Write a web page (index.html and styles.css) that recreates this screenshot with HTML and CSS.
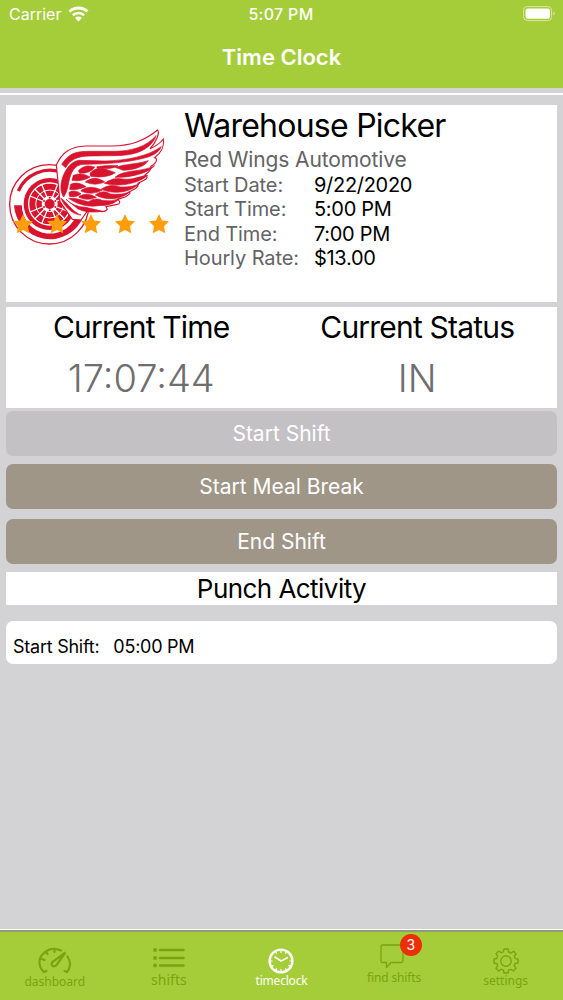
FILE: index.html
```html
<!DOCTYPE html>
<html lang="en">
<head>
  <meta charset="UTF-8" />
  <meta name="viewport" content="width=device-width, initial-scale=1.0" />
  <title>Time Clock</title>
  <link rel="stylesheet" href="styles.css">
</head>
<body>
  <svg class="defs" width="0" height="0">
    <symbol id="star" viewBox="0 0 20 20">
      <path d="M10 0 L13 6.4 L20 7.3 L15 12.3 L16.2 19.3 L10 16 L3.8 19.3 L5 12.3 L0 7.3 L7 6.4 Z" />
    </symbol>
  </svg>

  <header class="header">
    <div class="status-bar">
      <div class="carrier">
        <span>Carrier</span>
        <svg width="21" height="16" viewBox="0 0 21 16">
          <path d="M1.5 5.6 A13 13 0 0 1 19.5 5.6" fill="none" stroke="#fff" stroke-width="2.8" />
          <path d="M4.8 9.3 A8.2 8.2 0 0 1 16.2 9.3" fill="none" stroke="#fff" stroke-width="2.6" />
          <path d="M10.5 15.4 L7 11.9 A5 5 0 0 1 14 11.9 Z" fill="#fff" />
        </svg>
      </div>
      <span class="clock">5:07 PM</span>
      <svg class="battery" width="33" height="16" viewBox="0 0 33 16">
        <rect x="0.6" y="0.6" width="28" height="14" rx="4" fill="none" stroke="#fff" stroke-opacity="0.55" />
        <rect x="2.5" y="2.5" width="24.5" height="10.3" rx="2.2" fill="#fff" />
        <path d="M30.5 5.5 Q33 7.6 30.5 9.7 Z" fill="#fff" fill-opacity="0.6" />
      </svg>
    </div>
    <h1>Time Clock</h1>
  </header>

  <main class="content">
    <section class="job-card">
      <div class="photo">
        <svg class="logo" width="172" height="145" viewBox="18 15 516 435">
          <!-- wheel -->
          <circle cx="148" cy="313" r="119" fill="#fff" stroke="#d8142f" stroke-width="4" />
          <path d="M42 316 L66 316 A84 84 0 0 0 232 335 L250 350 A108 108 0 0 1 42 316 Z" fill="#d8142f" />
          <path d="M55 273 A103 103 0 0 1 190 219" fill="none" stroke="#d8142f" stroke-width="10" />
          <circle cx="149" cy="312" r="84" fill="#fff" />
          <circle cx="149" cy="312" r="78" fill="#d8142f" />
          <circle cx="149" cy="312" r="63" fill="none" stroke="#fff" stroke-width="4" />
          <circle cx="149" cy="312" r="42" fill="none" stroke="#fff" stroke-width="3" />
          <g stroke="#fff" stroke-width="4">
            <path d="M125 253 L173 371 M173 253 L125 371 M90 288 L208 336 M208 288 L90 336" />
            <path d="M149 312 L104 267 M149 312 L194 267 M149 312 L104 357 M149 312 L194 357" />
          </g>
          <circle cx="149" cy="312" r="24" fill="#fff" />
          <circle cx="149" cy="312" r="15" fill="#d8142f" />
          <g fill="#d8142f">
            <circle cx="149" cy="293" r="3" /><circle cx="149" cy="331" r="3" />
            <circle cx="132" cy="303" r="3" /><circle cx="166" cy="303" r="3" />
            <circle cx="132" cy="321" r="3" /><circle cx="166" cy="321" r="3" />
          </g>
          <!-- wing -->
          <g transform="translate(165 75)">
            <path d="M4 120 C20 84 44 65 92 63 L170 63 C230 62 266 48 308 15 C314 23 306 48 285 71 C302 64 315 55 325 42 C329 64 317 85 299 98 Q308 101 302 112 Q296 120 288 124 Q290 135 270 150 Q284 156 267 166 L249 175 Q252 183 239 192 L222 201 Q232 204 210 216 L188 223 Q203 235 184 239 L153 245 Q163 258 141 260 L100 254 L78 285 L52 283 L15 230 Z" fill="#fff" stroke="#d8142f" stroke-width="3.5" />
            <g fill="#d8142f" stroke="#d8142f" stroke-width="2">
              <path d="M20 118 C39 89 58 79 98 79 L180 79 C230 78 275 65 303 32 C297 52 278 72 246 83 C210 95 164 91 104 93 C66 94 47 103 32 128 Z" />
              <path d="M26 216 C2 184 34 106 75 106 L150 108 C219 106 277 94 319 65 C314 79 296 91 276 97 C232 110 170 116 123 117 L86 118 C58 119 48 142 42 168 C38 188 36 202 26 216 Z" />
              <path d="M70 137 C86 122 100 120 119 126 Q108 145 74 145 Z" />
              <path d="M126 125 Q156 120 189 122 Q174 134 126 129 Z" />
              <path d="M181 127 C212 116 247 118 280 107 C269 125 237 134 205 136 Z" />
              <path d="M55 151 Q80 141 105 156 Q80 171 51 166 Z" />
              <path d="M105 145 Q123 124 151 132 L181 143 Q153 161 107 154 Z" />
              <path d="M180 157 C207 132 259 143 299 122 C278 145 227 158 180 157 Z" />
              <path d="M47 178 Q68 168 93 185 Q66 197 44 193 Z" />
              <path d="M91 171 Q119 149 149 171 Q120 184 91 171 Z" />
              <path d="M148 175 Q174 156 203 162 C234 167 255 152 278 151 C254 174 196 188 148 175 Z" />
              <path d="M79 195 Q106 178 141 196 Q112 212 79 199 Z" />
              <path d="M138 193 Q164 174 196 186 Q234 188 255 174 C230 200 184 211 138 193 Z" />
              <path d="M42 202 Q58 192 78 206 Q65 218 43 214 Z" />
              <path d="M72 214 Q97 200 124 217 Q97 229 72 217 Z" />
              <path d="M121 210 Q144 192 166 207 Q201 211 225 200 C200 225 151 227 121 210 Z" />
              <path d="M41 220 C76 217 107 239 146 238 C112 250 72 242 41 220 Z" />
              <path d="M98 232 Q121 215 141 226 Q170 231 193 221 C170 244 137 247 98 232 Z" />
              <path d="M18 220 C35 230 54 263 78 270 C58 270 29 249 18 220 Z" />
              <path d="M33 223 Q56 246 92 247 L143 259 Q97 266 69 252 Z" />
            </g>
          </g>
        </svg>
        <div class="stars">
          <svg><use href="#star" /></svg>
          <svg><use href="#star" /></svg>
          <svg><use href="#star" /></svg>
          <svg><use href="#star" /></svg>
          <svg><use href="#star" /></svg>
        </div>
      </div>
      <div class="job-info">
        <h2>Warehouse Picker</h2>
        <p class="company">Red Wings Automotive</p>
        <dl>
          <dt>Start Date:</dt><dd>9/22/2020</dd>
          <dt>Start Time:</dt><dd>5:00 PM</dd>
          <dt>End Time:</dt><dd>7:00 PM</dd>
          <dt>Hourly Rate:</dt><dd>$13.00</dd>
        </dl>
      </div>
    </section>

    <section class="now-card">
      <div class="now-col">
        <h3>Current Time</h3>
        <div class="now-value">17:07:44</div>
      </div>
      <div class="now-col">
        <h3>Current Status</h3>
        <div class="now-value">IN</div>
      </div>
    </section>

    <div class="actions">
      <button class="btn btn-start" disabled>Start Shift</button>
      <button class="btn">Start Meal Break</button>
      <button class="btn">End Shift</button>
    </div>

    <h3 class="punch-title">Punch Activity</h3>
    <div class="punch-row">
      <span>Start Shift:</span>
      <span>05:00 PM</span>
    </div>
  </main>

  <nav class="tab-bar">
    <a class="tab dashboard">
      <svg width="34" height="28" viewBox="0 0 34 28" fill="none" stroke="#7aa40d" stroke-width="2.2" stroke-linecap="round">
        <path d="M6 25 C0 20 0 11 5.5 6.5 C10 1.5 17 0.5 23 3.5" />
        <path d="M29.5 9.5 C33 15 33 20 29 25" />
        <path d="M6 25 L8.5 24 M29 25 L26.5 24 M4 12 L6.5 13 M16.5 2 V5 M8 5 L9.5 7" />
        <path d="M27.5 5.5 L15 14.5 C11.5 18 15.5 21 18.5 18 Z" />
      </svg>
      <span>dashboard</span>
    </a>
    <a class="tab shifts">
      <svg width="32" height="20" viewBox="0 0 32 20" stroke="#7aa40d" stroke-width="2.5" stroke-linecap="round">
        <path d="M7 2 H30.5 M7 10 H30.5 M7 17.5 H30.5" />
        <path d="M2 2 H2.1 M2 10 H2.1 M2 17.5 H2.1" stroke-width="3.8" />
      </svg>
      <span>shifts</span>
    </a>
    <a class="tab timeclock">
      <svg width="26" height="26" viewBox="0 0 26 26" fill="none" stroke="#fff">
        <circle cx="13" cy="13" r="11.4" stroke-width="2.4" />
        <path d="M6.5 8.8 L13 13 L19.8 9.5" stroke-width="1.8" />
        <path d="M13 2 V5 M13 21 V24 M2 13 H4.5 M21.5 13 H24 M7.5 3.5 L8.7 5.6 M18.5 3.5 L17.3 5.6 M3.5 18.5 L5.6 17.3 M22.5 18.5 L20.4 17.3 M7.5 22.5 L8.7 20.4 M18.5 22.5 L17.3 20.4" stroke-width="1.2" />
      </svg>
      <span>timeclock</span>
    </a>
    <a class="tab find-shifts">
      <svg width="24" height="25" viewBox="0 0 24 25" fill="none" stroke="#7aa40d" stroke-width="1.3" stroke-linejoin="round">
        <path d="M2.5 1 H21.5 Q23 1 23 2.5 V17 Q23 18.5 21.5 18.5 H11 L6.5 23.5 V18.5 H2.5 Q1 18.5 1 17 V2.5 Q1 1 2.5 1 Z" />
      </svg>
      <span class="badge">3</span>
      <span>find shifts</span>
    </a>
    <a class="tab settings">
      <svg width="26" height="26" viewBox="0 0 26 26" fill="none" stroke="#7aa40d" stroke-width="1.4" stroke-linejoin="round">
        <path d="M11 1 H15 L15.7 4 L18.2 5 L20.8 3.2 L23 6 L21.4 8.2 L22.2 10.6 L25 11 V15 L22.2 15.5 L21.3 17.8 L23 20.2 L20.2 23 L17.9 21.3 L15.6 22.2 L15 25 H11 L10.4 22.2 L8.1 21.3 L5.8 23 L3 20.2 L4.7 17.8 L3.8 15.5 L1 15 V11 L3.8 10.5 L4.7 8.1 L3 5.8 L5.8 3 L8.1 4.7 L10.4 3.8 Z" />
        <circle cx="13" cy="13" r="5.2" />
      </svg>
      <span>settings</span>
    </a>
  </nav>
</body>
</html>
```
FILE: styles.css
```css
* {
  box-sizing: border-box;
}
body {
  margin: 0;
  height: 1000px;
  display: flex;
  flex-direction: column;
  overflow: hidden;
  font-family: Inter, "Liberation Sans", sans-serif;
  background: #d3d3d5;
  color: #000;
}
h1, h2, h3, p, dl, dd {
  margin: 0;
  font-weight: 400;
}
.defs {
  position: absolute;
}

/* header */
.header {
  height: 88px;
  background: #a5cd39;
  color: #fff;
}
.status-bar {
  display: grid;
  grid-template-columns: 1fr auto 1fr;
  align-items: center;
  height: 28px;
  padding: 0 7px 0 9px;
  font-size: 16px;
}
.carrier {
  display: flex;
  align-items: center;
  gap: 7px;
}
.clock {
  margin-right: 3px;
  font-weight: 500;
  letter-spacing: 0.3px;
}
.battery {
  justify-self: end;
}
.header h1 {
  margin-top: 14px;
  text-align: center;
  font-size: 22px;
  line-height: 30px;
  font-weight: 600;
}

/* content */
.content {
  flex: 1;
  margin-top: 5px;
  padding: 10px 6px 0;
  border-top: 2px solid #fff;
}
.job-card {
  display: flex;
  height: 197px;
  background: #fff;
}
.photo {
  position: relative;
  width: 178px;
}
.logo {
  display: block;
}
.stars {
  position: absolute;
  left: 7px;
  top: 109px;
  display: flex;
  gap: 14px;
}
.stars svg {
  width: 20px;
  height: 20px;
  fill: #ff9d0a;
}
.job-info h2 {
  padding-top: 2px;
  font-size: 32px;
  line-height: 38px;
  letter-spacing: -0.75px;
}
.company {
  margin-top: 2px;
  font-size: 21px;
  line-height: 25px;
  letter-spacing: -0.12px;
  color: #636366;
}
.job-info dl {
  display: grid;
  grid-template-columns: 130px auto;
  padding-top: 1px;
  font-size: 20px;
  line-height: 24.4px;
}
.job-info dt {
  letter-spacing: -0.1px;
  color: #636366;
}
.job-info dd {
  letter-spacing: -0.3px;
}
.now-card {
  display: flex;
  height: 101px;
  margin-top: 5px;
  background: #fff;
}
.now-col {
  width: 50%;
  padding-right: 5px;
  text-align: center;
}
.now-col h3 {
  padding-top: 2px;
  font-size: 30px;
  line-height: 36px;
  letter-spacing: -0.8px;
}
.now-col + .now-col {
  padding-right: 4px;
}
.now-value {
  margin-top: 9px;
  font-size: 38px;
  line-height: 48px;
  font-weight: 300;
  color: #6e6e70;
}
.actions {
  display: flex;
  flex-direction: column;
  gap: 10px;
  margin-top: 3px;
}
.btn {
  height: 45px;
  padding: 0 0 1px;
  border: none;
  border-radius: 7px;
  background: #9f9688;
  color: #fff;
  font-family: inherit;
  font-size: 21px;
}
.btn-start {
  margin-bottom: -2px;
}
.btn:disabled {
  background: #c3c1c4;
}
.punch-title {
  height: 33px;
  margin-top: 8px;
  background: #fff;
  text-align: center;
  font-size: 26px;
  line-height: 34px;
  letter-spacing: -0.55px;
}
.punch-row {
  display: flex;
  gap: 14px;
  height: 43px;
  margin-top: 16px;
  padding: 14px 7px 0;
  border-radius: 7px;
  background: #fff;
  font-size: 18px;
  line-height: 24px;
  letter-spacing: -0.25px;
}

/* tab bar */
.tab-bar {
  display: flex;
  height: 71px;
  border-top: 1px solid #fff;
  background: #a5cd39;
  box-shadow: inset 0 2px 0 #8f9b76;
}
.tab {
  position: relative;
  width: 20%;
  display: flex;
  flex-direction: column;
  align-items: center;
  padding-top: 18px;
  font-family: "Noto Sans", sans-serif;
  font-size: 12px;
  line-height: 14px;
  color: #7aa40d;
}
.dashboard {
  padding-top: 17px;
  padding-right: 3px;
}
.shifts {
  font-size: 14px;
}
.shifts svg {
  margin: 0 0 5px;
}
.timeclock {
  color: #fff;
  letter-spacing: -0.2px;
}
.find-shifts {
  padding-top: 14px;
  letter-spacing: -0.15px;
}
.find-shifts svg {
  margin: 0 4px 2px 0;
}
.settings {
  padding-right: 2px;
}
.badge {
  position: absolute;
  left: 62px;
  top: 4px;
  width: 22px;
  height: 22px;
  border-radius: 50%;
  background: #ec2f06;
  color: #fff;
  font-family: Inter, sans-serif;
  font-size: 14px;
  line-height: 22px;
  text-align: center;
}
```
